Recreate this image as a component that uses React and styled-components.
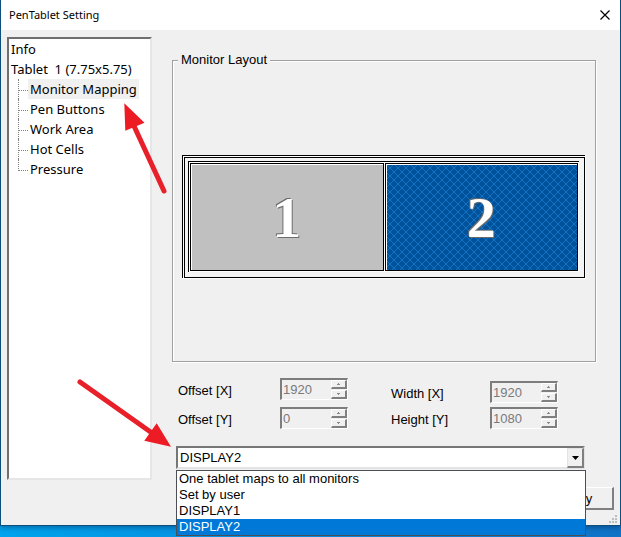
import React, { useState } from 'react'
import styled, { createGlobalStyle, css } from 'styled-components'

const treeItems = ['Monitor Mapping', 'Pen Buttons', 'Work Area', 'Hot Cells', 'Pressure']
const displays = ['One tablet maps to all monitors', 'Set by user', 'DISPLAY1', 'DISPLAY2']

const SpinField = ({ id, label, value }) => (
  <FieldRow>
    <FieldLabel htmlFor={id}>{label}</FieldLabel>
    <SpinBox>
      <SpinInput id={id} type="text" defaultValue={value} disabled />
      <SpinButtons>
        <SpinButton type="button" aria-label={`${label} up`} disabled>
          <svg width="3" height="2" viewBox="0 0 3 2"><path d="M1 0h1v1h1v1H0V1h1z" fill="#8a8a8a" /></svg>
        </SpinButton>
        <SpinButton type="button" aria-label={`${label} down`} disabled>
          <svg width="3" height="2" viewBox="0 0 3 2"><path d="M0 0h3v1H2v1H1V1H0z" fill="#8a8a8a" /></svg>
        </SpinButton>
      </SpinButtons>
    </SpinBox>
  </FieldRow>
)

const App = () => {
  const [page, setPage] = useState('Monitor Mapping')
  const [display, setDisplay] = useState('DISPLAY2')

  return (
    <Desktop>
      <GlobalStyle />
      <Window>
        <TitleBar>
          <Title>PenTablet Setting</Title>
          <CloseButton type="button" aria-label="Close">
            <svg width="10" height="10" viewBox="0 0 10 10">
              <path d="M0.500 0.500l9 9M9.500 0.500l-9 9" stroke="#000" strokeWidth="1.2" />
            </svg>
          </CloseButton>
        </TitleBar>

        <Body>
          <Tree>
            <TreeRoot>Info</TreeRoot>
            <TreeRoot>Tablet&nbsp; 1 (7.75x5.75)</TreeRoot>
            <Branch>
              {treeItems.map((item) => (
                <Leaf key={item}>
                  <LeafButton type="button" $active={item === page} onClick={() => setPage(item)}>
                    {item}
                  </LeafButton>
                </Leaf>
              ))}
            </Branch>
          </Tree>

          <Main>
            <Group>
              <Legend>Monitor Layout</Legend>
              <Wall>
                <WallEdge>
                  <Screens>
                    <Screen>1</Screen>
                    <Screen $selected>2</Screen>
                  </Screens>
                </WallEdge>
              </Wall>
            </Group>

            <Fields>
              <FieldColumn $labelWidth="102px" $gap="7px">
                <SpinField id="offset-x" label="Offset [X]" value="1920" />
                <SpinField id="offset-y" label="Offset [Y]" value="0" />
              </FieldColumn>
              <FieldColumn $labelWidth="99px" $gap="4px">
                <SpinField id="width-x" label="Width [X]" value="1920" />
                <SpinField id="height-y" label="Height [Y]" value="1080" />
              </FieldColumn>
            </Fields>

            <Combo>
              <ComboSelect aria-label="Display" value={display} onChange={(e) => setDisplay(e.target.value)}>
                {displays.map((d) => <option key={d}>{d}</option>)}
              </ComboSelect>
              <ComboArrow>
                <svg width="7" height="4" viewBox="0 0 7 4"><path d="M0 0h7L3.5 4z" fill="#000" /></svg>
              </ComboArrow>
              <Menu role="listbox" aria-label="Displays">
                {displays.map((d) => (
                  <MenuItem key={d} role="option" aria-selected={d === display} $active={d === display} onClick={() => setDisplay(d)}>
                    {d}
                  </MenuItem>
                ))}
              </Menu>
            </Combo>
          </Main>
        </Body>

        <Footer>
          <ApplyButton type="button">Apply</ApplyButton>
        </Footer>
        <Grip width="8" height="8" viewBox="0 0 8 8" aria-hidden="true">
          <path d="M6 0h2v2H6zM3 3h2v2H3zM6 3h2v2H6zM0 6h2v2H0zM3 6h2v2H3zM6 6h2v2H6z" fill="#bdbdbd" />
        </Grip>
      </Window>

      {/* red pointers over the dialog */}
      <Pointers width="180" height="460" viewBox="0 0 180 460" aria-hidden="true">
        <path d="M164 191L134 126M80 382L152 433" stroke="#e8202a" strokeWidth="5" strokeLinecap="round" />
        <path d="M124.300 103.300L144.500 122.700L125.300 130.700zM171 446.700L156.700 423.300L144.300 440.700z" fill="#ed1c24" />
      </Pointers>
    </Desktop>
  )
}

const GlobalStyle = createGlobalStyle`
  * {
    box-sizing: border-box;
  }
  body {
    margin: 0;
    font-family: "Liberation Sans", Arial, sans-serif;
    font-size: 13px;
    color: #000;
  }
  button, input, select {
    font: inherit;
    color: inherit;
  }
`

const Desktop = styled.div`
  position: relative;
  display: flex;
  flex-direction: column;
  min-height: 100vh;
  padding-bottom: 11px;
  background: linear-gradient(90deg, #00a4ee, #0b84d8 60%, #1173c6);
`

const Window = styled.div`
  position: relative;
  flex: 1;
  display: flex;
  flex-direction: column;
  background: #f0f0f0;
  border: 1px solid #0d4f7c;
  border-top-width: 0;
  box-shadow: 0 1px 6px rgba(0, 30, 70, 0.5);
`

const TitleBar = styled.div`
  display: flex;
  align-items: center;
  justify-content: space-between;
  height: 30px;
  padding: 0 10px 0 8px;
  background: #fff;
`

const Title = styled.div`
  font-family: "Noto Sans", "Open Sans", sans-serif;
  font-size: 11px;
  line-height: 16px;
`

const CloseButton = styled.button`
  display: flex;
  padding: 0;
  border: none;
  background: none;
`

const Body = styled.div`
  flex: 1;
  display: flex;
  gap: 20px;
  padding: 7px 24px 7px 6px;
`

const Tree = styled.div`
  width: 145px;
  flex-shrink: 0;
  background: #fff;
  border: 2px solid;
  border-color: #6f6f6f #e6e6e6 #e6e6e6 #6f6f6f;
  font-family: "Noto Sans", "Open Sans", sans-serif;
  font-size: 13px;
  line-height: 20px;
  white-space: nowrap;
`

const TreeRoot = styled.div`
  padding-left: 2px;
`

const Branch = styled.ul`
  list-style: none;
  margin: 0;
  padding: 0 0 0 9px;
`

const Leaf = styled.li`
  position: relative;
  display: flex;
  padding-left: 10px;

  &::before {
    content: "";
    position: absolute;
    left: 0;
    top: 0;
    width: 9px;
    height: 11px;
    border-left: 1px dotted #808080;
    border-bottom: 1px dotted #808080;
  }
  &:not(:last-child)::after {
    content: "";
    position: absolute;
    left: 0;
    top: 11px;
    height: 9px;
    border-left: 1px dotted #808080;
  }
`

const LeafButton = styled.button`
  padding: 0 2px;
  border: none;
  background: ${({ $active }) => ($active ? '#f0f0f0' : 'transparent')};
`

const Main = styled.div`
  flex: 1;
  display: flex;
  flex-direction: column;
  padding: 15px 0 11px;
`

const Group = styled.fieldset`
  flex: 1;
  display: flex;
  flex-direction: column;
  justify-content: center;
  min-height: 200px;
  margin: 0;
  padding: 4px 10px 0 9px;
  border: 1px solid #a0a0a0;
  box-shadow: inset 1px 1px #fff, 1px 1px #fff;
`

const Legend = styled.legend`
  margin-left: -4px;
  padding: 0 3px;
  line-height: 16px;
  background: #f0f0f0;
`

const Wall = styled.div`
  padding: 1px 0 0 1px;
  border: solid #000;
  border-width: 1px 0 0 1px;
  background: #fff;
  box-shadow: 1px 1px #fff;
`

const WallEdge = styled.div`
  padding: 3px 5px 5px 3px;
  border: 1px solid #000;
  background: #f4f4f4;
`

const Screens = styled.div`
  display: flex;
  gap: 1px;
  padding: 1px;
  border: solid #000;
  border-width: 1px 0 0 1px;
  background: #fff;
`

// 8px diagonal cross hatch
const hatch = css`
  background-color: #00529b;
  background-image: url("data:image/svg+xml,%3Csvg xmlns='http://www.w3.org/2000/svg' width='8' height='8' shape-rendering='crispEdges'%3E%3Cpath fill='%231272c4' d='M0 0h1v1H0zM1 1h1v1H1zM2 2h1v1H2zM3 3h1v1H3zM4 4h1v1H4zM5 5h1v1H5zM6 6h1v1H6zM7 7h1v1H7zM7 0h1v1H7zM6 1h1v1H6zM5 2h1v1H5zM4 3h1v1H4zM3 4h1v1H3zM2 5h1v1H2zM1 6h1v1H1zM0 7h1v1H0z'/%3E%3C/svg%3E");
`

const Screen = styled.div`
  flex: 1;
  display: flex;
  align-items: center;
  justify-content: center;
  height: 108px;
  border: 1px solid #000;
  box-shadow: inset 1px 1px #fff;
  background-color: #c0c0c0;
  ${({ $selected }) => $selected && hatch}
  color: #fff;
  font: bold 58px "Liberation Serif", "Times New Roman", serif;
  text-shadow: -1px -1px #6b6b6b, 1px 1px #6b6b6b;
`

const Fields = styled.div`
  display: grid;
  grid-template-columns: 1fr 1fr;
  align-items: end;
  gap: 8px;
  margin: 16px 0 17px;
  padding-left: 6px;
`

const FieldColumn = styled.div`
  display: grid;
  gap: ${({ $gap }) => $gap};

  label {
    width: ${({ $labelWidth }) => $labelWidth};
  }
`

const FieldRow = styled.div`
  display: flex;
  align-items: center;
`

const FieldLabel = styled.label`
  padding-top: 3px;
  line-height: 16px;
`

const SpinBox = styled.div`
  display: flex;
  width: 68px;
  height: 22px;
  border: 2px solid;
  border-color: #7d7d7d #fff #fff #7d7d7d;
  border-right-width: 1px;
  border-bottom-width: 1px;
`

const SpinInput = styled.input`
  flex: 1;
  min-width: 0;
  padding: 0 0 0 1px;
  border: none;
  background: transparent;
  color: #7a7a7a;
`

const SpinButtons = styled.div`
  display: grid;
  grid-template-rows: 1fr 1fr;
  gap: 1px;
  width: 16px;
`

const SpinButton = styled.button`
  display: flex;
  align-items: center;
  justify-content: center;
  padding: 0;
  border: solid;
  border-width: 1px 2px 2px 1px;
  border-color: #fff #808080 #808080 #fff;
  background: #f0f0f0;
`

const Combo = styled.div`
  position: relative;
  margin: 0 11px 0 4px;
`

const ComboSelect = styled.select`
  display: block;
  appearance: none;
  width: 100%;
  height: 23px;
  padding: 0 20px 0 2px;
  border: 2px solid;
  border-color: #767676 #e3e3e3 #e3e3e3 #767676;
  border-radius: 0;
  background: #fff;
  outline: none;
`

const ComboArrow = styled.span`
  position: absolute;
  top: 2px;
  right: 1px;
  bottom: 1px;
  display: flex;
  align-items: center;
  justify-content: center;
  width: 17px;
  border: solid;
  border-width: 1px 2px 2px 1px;
  border-color: #e3e3e3 #808080 #808080 #e3e3e3;
  background: #f0f0f0;
  pointer-events: none;
`

const Menu = styled.ul`
  position: absolute;
  z-index: 2;
  top: 24px;
  left: 0;
  right: -1px;
  margin: 0;
  padding: 0;
  border: 1px solid #4a4f55;
  background: #fff;
  list-style: none;
`

const MenuItem = styled.li`
  padding-left: 2px;
  line-height: 16px;
  background: ${({ $active }) => ($active ? '#0078d7' : '#fff')};
  color: ${({ $active }) => ($active ? '#fff' : '#000')};
`

const Footer = styled.div`
  display: flex;
  justify-content: flex-end;
  padding: 0 6px 15px;
`

const ApplyButton = styled.button`
  width: 75px;
  height: 23px;
  padding: 0;
  border: solid;
  border-width: 1px 2px 2px 1px;
  border-color: #fff #808080 #808080 #fff;
  background: #f0f0f0;
`

const Grip = styled.svg`
  position: absolute;
  right: 3px;
  bottom: 2px;
`

const Pointers = styled.svg`
  position: absolute;
  top: 0;
  left: 0;
  z-index: 3;
  pointer-events: none;
`

export default App
